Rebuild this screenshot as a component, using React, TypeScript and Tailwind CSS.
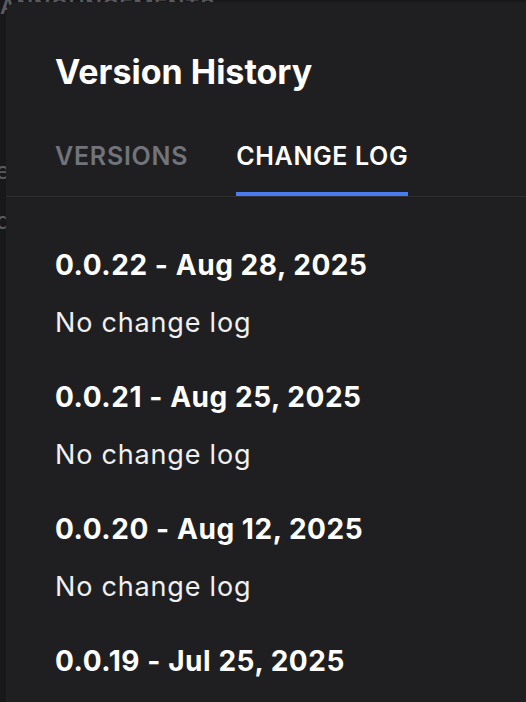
const entries = [
  { version: "0.0.22", date: "Aug 28, 2025", log: "" },
  { version: "0.0.21", date: "Aug 25, 2025", log: "" },
  { version: "0.0.20", date: "Aug 12, 2025", log: "" },
  { version: "0.0.19", date: "Jul 25, 2025", log: "" },
];

export default function App() {
  return (
    <div className="relative w-[526px] h-[702px] overflow-hidden bg-[#18181a] font-['Inter',sans-serif]">
      {/* page behind the drawer */}
      <div className="text-[#5a5b5f]">
        <div className="-mt-[10px] text-[22px] font-semibold tracking-wide">ANNOUNCEMENTS</div>
        <div className="mt-[130px] -ml-[10px] text-[24px]">le</div>
        <div className="mt-[14px] -ml-[4px] text-[24px]">d</div>
      </div>

      <div className="absolute left-[6px] top-[2px] right-0 bottom-0 rounded-tl-xl bg-[#1f1f21]">
        <h1 className="pl-[49px] pt-[50px] text-[34px] leading-[40px] font-bold text-white">
          Version History
        </h1>

        <div className="mt-[48px] flex gap-12 border-b border-[#303033] pl-[49px]">
          <button className="pb-[20px] border-b-4 border-transparent text-[25px] leading-[32px] tracking-[0.03em] font-semibold text-[#71747b]">
            VERSIONS
          </button>
          <button className="pb-[20px] border-b-4 border-[#4a7cf0] text-[25px] leading-[32px] tracking-[0.025em] font-semibold text-white">
            CHANGE LOG
          </button>
        </div>

        <div className="pl-[49px] pt-[50px] flex flex-col gap-10">
          {entries.map((e) => (
            <div key={e.version}>
              <h2 className="text-[28px] leading-[36px] tracking-[0.02em] font-bold text-white">
                {e.version} - {e.date}
              </h2>
              <p className="mt-6 text-[27px] leading-[32px] tracking-[0.03em] text-[#f0f0f0]">
                {e.log || "No change log"}
              </p>
            </div>
          ))}
        </div>
      </div>
    </div>
  );
}
